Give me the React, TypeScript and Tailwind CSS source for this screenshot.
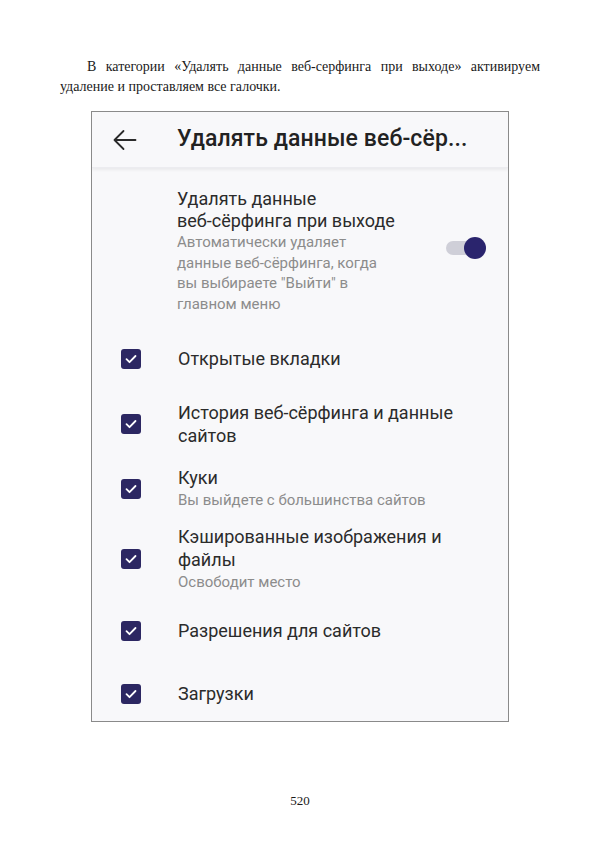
import React from "react";

const serif = { fontFamily: '"Liberation Serif", "Times New Roman", serif' };

function Check() {
  return (
    <div className="w-[20px] h-[20px] rounded-[3px] bg-[#2c2762] flex items-center justify-center flex-shrink-0">
      <svg width="14" height="14" viewBox="0 0 14 14" fill="none">
        <path d="M2.5 7.2l3 3L11.5 4" stroke="#fff" strokeWidth="1.8" strokeLinecap="round" strokeLinejoin="round" />
      </svg>
    </div>
  );
}

function Row({ mt, children }: { mt: string; children: React.ReactNode }) {
  return (
    <div className={`flex items-center ${mt}`}>
      <div className="w-[86px] pl-[29px]">
        <Check />
      </div>
      <div className="flex-1">{children}</div>
    </div>
  );
}

export default function App() {
  return (
    <div className="w-[600px] h-[849px] bg-white relative">
      <p
        className="pt-[57px] px-[60px] text-[14px] leading-[20px] text-[#1a1a1a] text-justify indent-[27px]"
        style={serif}
      >
        В категории «Удалять данные веб-серфинга при выходе» активируем удаление и проставляем все галочки.
      </p>

      <div
        className="mt-[14px] ml-[91px] w-[418px] h-[611px] border border-[#8a8a8a] bg-[#f8f8fa] overflow-hidden"
        style={{ fontFamily: 'Roboto, "Noto Sans", sans-serif' }}
      >
        {/* header */}
        <div className="h-[56px] flex items-center bg-[#f8f8fa] shadow-[0_2px_3px_rgba(0,0,0,0.06)] border-b border-[#ececf0]">
          <div className="w-[85px] pl-[21px]">
            <svg width="24" height="22" viewBox="0 0 24 22" fill="none">
              <path d="M1.5 11h21M1.5 11l9-9M1.5 11l9 9" stroke="#2a2a2a" strokeWidth="1.8" strokeLinecap="round" />
            </svg>
          </div>
          <div className="text-[23px] font-medium text-[#222] tracking-[0.1px]">Удалять данные веб-сёр...</div>
        </div>

        {/* toggle item */}
        <div className="flex items-center pt-[20px]">
          <div className="w-[85px]" />
          <div className="flex-1">
            <div className="text-[18px] leading-[22px] text-[#2b2b2b]">
              Удалять данные
              <br />
              веб-сёрфинга при выходе
            </div>
            <div className="text-[15px] leading-[20.7px] text-[#8c8c8c]">
              Автоматически удаляет
              <br />
              данные веб-сёрфинга, когда
              <br />
              вы выбираете "Выйти" в
              <br />
              главном меню
            </div>
          </div>
          <div className="relative w-[40px] h-[22px] mr-[22px] mb-[6px]">
            <div className="absolute left-0 top-[4px] w-[32px] h-[14px] rounded-full bg-[#cfcfd8]" />
            <div className="absolute right-0 top-0 w-[22px] h-[22px] rounded-full bg-[#2a246d]" />
          </div>
        </div>

        <Row mt="mt-[33px]">
          <div className="text-[18px] leading-[22px] text-[#2b2b2b]">Открытые вкладки</div>
        </Row>

        <Row mt="mt-[31px]">
          <div className="text-[18px] leading-[23px] text-[#2b2b2b]">
            История веб-сёрфинга и данные
            <br />
            сайтов
          </div>
        </Row>

        <Row mt="mt-[20px]">
          <div className="text-[18px] leading-[22px] text-[#2b2b2b]">Куки</div>
          <div className="text-[15px] leading-[22px] text-[#8c8c8c]">Вы выйдете с большинства сайтов</div>
        </Row>

        <Row mt="mt-[14px]">
          <div className="text-[18px] leading-[23px] text-[#2b2b2b]">
            Кэшированные изображения и
            <br />
            файлы
          </div>
          <div className="text-[15px] leading-[22px] text-[#8c8c8c]">Освободит место</div>
        </Row>

        <Row mt="mt-[27px]">
          <div className="text-[18px] leading-[22px] text-[#2b2b2b]">Разрешения для сайтов</div>
        </Row>

        <Row mt="mt-[41px]">
          <div className="text-[18px] leading-[22px] text-[#2b2b2b]">Загрузки</div>
        </Row>
      </div>

      <div className="absolute left-0 right-0 top-[791px] text-center text-[13px] text-[#1a1a1a]" style={serif}>
        520
      </div>
    </div>
  );
}
